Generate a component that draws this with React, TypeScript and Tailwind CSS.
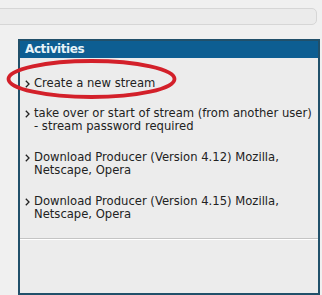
import React from "react";

const Arrow = () => (
  <svg width="5" height="8" viewBox="0 0 5 8" className="shrink-0 mt-[3px]">
    <path d="M0.8 0.8 L4 4 L0.8 7.2" fill="none" stroke="#222" strokeWidth="1.3" />
  </svg>
);

const Item = ({ lines }: { lines: string[] }) => (
  <div className="flex gap-[4px] pl-[5px]">
    <Arrow />
    <div className="leading-[13px]">
      {lines.map((l, i) => (
        <div key={i}>{l}</div>
      ))}
    </div>
  </div>
);

export default function App() {
  return (
    <div
      className="w-[322px] h-[295px] bg-[#f0f0f0] overflow-hidden relative"
      style={{ fontFamily: '"DejaVu Sans", Verdana, sans-serif' }}
    >
      <div className="mt-[8px] h-[17px] w-[320px] ml-[-3px] rounded-r-[5px] border border-[#d6d6d6] bg-[#ebebeb]" />
      <div className="ml-[18px] mt-[14px] w-[302px] h-[256px] border-2 border-[#21506a] bg-[#ececec] flex flex-col">
        <div className="h-[17px] bg-[#0d5e92] text-[#e6f3f8] font-bold text-[12px] leading-[17px] pl-[5px] tracking-[-0.4px]">
          Activities
        </div>
        <div className="text-[11.6px] text-[#222] flex flex-col">
          <div className="mt-[19px]">
            <Item lines={["Create a new stream"]} />
          </div>
          <div className="mt-[17px]">
            <Item lines={["take over or start of stream (from another user)", "- stream password required"]} />
          </div>
          <div className="mt-[18px]">
            <Item lines={["Download Producer (Version 4.12) Mozilla,", "Netscape, Opera"]} />
          </div>
          <div className="mt-[18px]">
            <Item lines={["Download Producer (Version 4.15) Mozilla,", "Netscape, Opera"]} />
          </div>
          <div className="mt-[17px] border-t border-[#c4c4c4] border-b-white border-b h-0" />
        </div>
      </div>
      <svg className="absolute left-0 top-0 pointer-events-none" width="322" height="295">
        <ellipse cx="91.5" cy="79" rx="83" ry="18" fill="none" stroke="#d3202a" strokeWidth="3.8" />
      </svg>
    </div>
  );
}
